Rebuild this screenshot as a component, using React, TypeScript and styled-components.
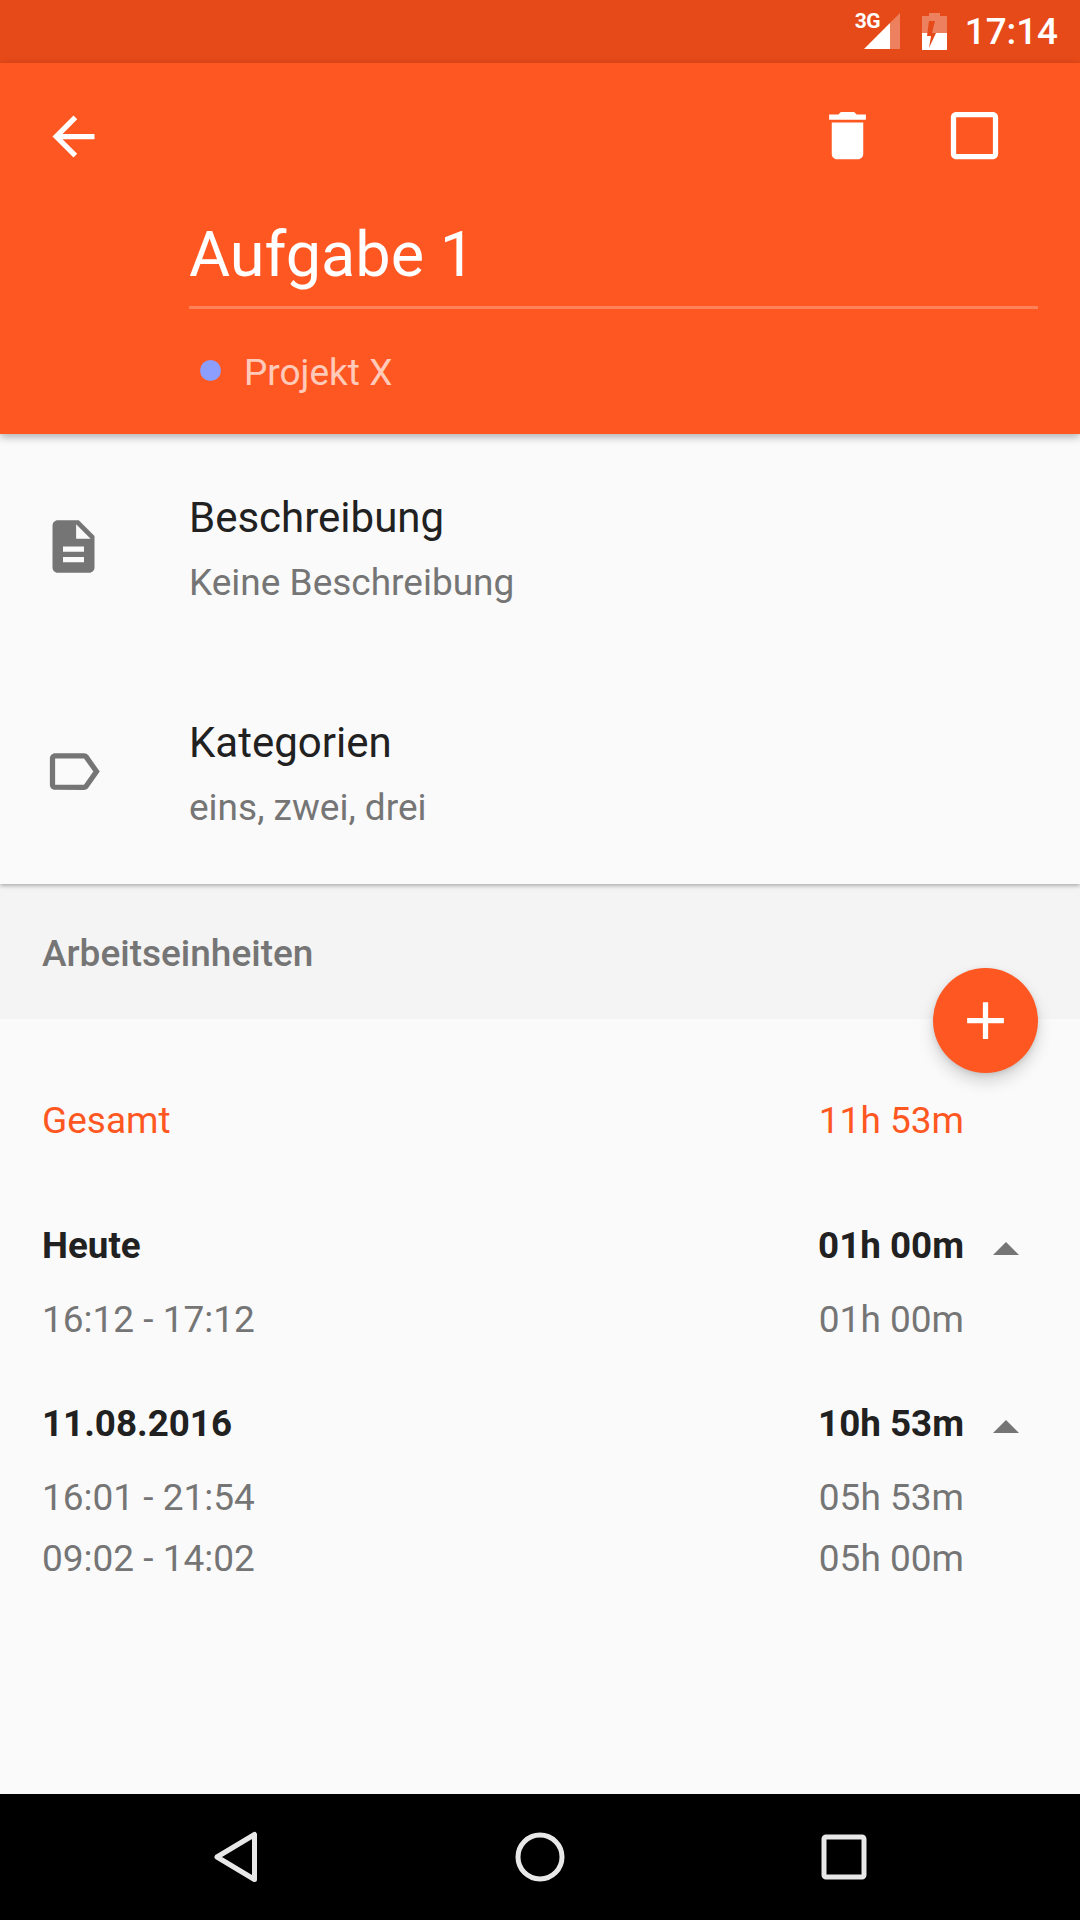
import { FC } from "react";
import styled, { createGlobalStyle } from "styled-components";

const palette = {
  primary: "#FF5722",
  primaryDark: "#E64A19",
  background: "#FAFAFA",
  section: "#F4F4F4",
  textDark: "#212121",
  textGrey: "#757575",
};

const GlobalStyle = createGlobalStyle`
  html, body {
    margin: 0;
    padding: 0;
    background: ${palette.background};
    font-family: Roboto, "Noto Sans", sans-serif;
  }
  * {
    box-sizing: border-box;
  }
`;

const Screen = styled.div`
  width: 1080px;
  height: 1920px;
  display: flex;
  flex-direction: column;
  overflow: hidden;
  background: ${palette.background};
`;

const StatusBar = styled.div`
  height: 63px;
  flex: none;
  display: flex;
  justify-content: flex-end;
  align-items: center;
  padding-right: 22px;
  background: ${palette.primaryDark};
  color: #fff;
`;

const SignalWrap = styled.div`
  position: relative;
  width: 45px;
  height: 36px;
  margin-right: 22px;
  margin-top: -1px;
`;

const NetworkLabel = styled.span`
  position: absolute;
  left: 0;
  top: 0;
  font-size: 21px;
  line-height: 17px;
  font-weight: 700;
  letter-spacing: -0.5px;
`;

const SignalSvg = styled.svg`
  position: absolute;
  right: 0;
  top: 0;
  width: 36px;
  height: 36px;
`;

const BatterySvg = styled.svg`
  width: 25px;
  height: 37px;
  margin-right: 18px;
  margin-top: -1px;
`;

const Clock = styled.span`
  font-size: 36.75px;
  font-weight: 500;
  line-height: 40px;
`;

const Header = styled.header`
  position: relative;
  z-index: 2;
  height: 371px;
  flex: none;
  background: ${palette.primary};
  box-shadow: 0 3px 8px rgba(0, 0, 0, 0.3);
  color: #fff;
`;

const Toolbar = styled.div`
  height: 147px;
  display: flex;
  align-items: center;
  padding: 0 42px;
`;

const IconSlot = styled.div`
  width: 127px;
  height: 126px;
  margin-top: -2px;
  display: flex;
  align-items: center;
  justify-content: center;
`;

const ToolbarSpacer = styled.div`
  flex: 1;
`;

const BackSlot = styled.div`
  flex: none;
  width: 63px;
  height: 63px;
`;

const Icon = styled.svg<{ $color?: string }>`
  display: block;
  width: 63px;
  height: 63px;
  fill: ${(props) => props.$color ?? "#fff"};
`;

const TitleBlock = styled.div`
  margin: 0 42px 0 189px;
  height: 99px;
  border-bottom: 3px solid rgba(255, 255, 255, 0.25);
`;

const Title = styled.div`
  font-size: 63px;
  line-height: 70px;
  padding-top: 10px;
`;

const ProjectRow = styled.div`
  height: 125px;
  display: flex;
  align-items: center;
  padding-left: 200px;
  padding-bottom: 2px;
`;

const ProjectDot = styled.span`
  width: 21px;
  height: 21px;
  border-radius: 50%;
  background: #8c9eff;
  margin-right: 23px;
`;

const ProjectName = styled.span`
  font-size: 37px;
  line-height: 44px;
  margin-top: 5px;
  color: rgba(255, 255, 255, 0.7);
`;

const InfoList = styled.section`
  position: relative;
  z-index: 1;
  flex: none;
  background: ${palette.background};
  box-shadow: 0 2px 4px rgba(0, 0, 0, 0.28);
`;

const InfoRow = styled.div`
  height: 225px;
  display: flex;
  align-items: center;
  padding-left: 42px;
`;

const InfoIcon = styled.div`
  width: 147px;
  flex: none;
`;

const InfoText = styled.div`
  display: flex;
  flex-direction: column;
  gap: 18px;
  margin-top: 5px;
`;

const InfoTitle = styled.div`
  font-size: 42px;
  line-height: 50px;
  color: ${palette.textDark};
`;

const InfoSub = styled.div`
  font-size: 37px;
  line-height: 44px;
  color: ${palette.textGrey};
`;

const SectionBar = styled.div`
  height: 135px;
  flex: none;
  display: flex;
  align-items: center;
  padding: 4px 0 0 42px;
  background: ${palette.section};
`;

const SectionLabel = styled.span`
  font-size: 37px;
  font-weight: 500;
  color: ${palette.textGrey};
`;

const Content = styled.main`
  position: relative;
  flex: 1;
  padding-top: 77px;
`;

const Fab = styled.button`
  position: absolute;
  top: -51px;
  right: 42px;
  width: 105px;
  height: 105px;
  padding: 0;
  border: none;
  border-radius: 50%;
  display: flex;
  align-items: center;
  justify-content: center;
  background: ${palette.primary};
  box-shadow: 0 8px 16px rgba(0, 0, 0, 0.16), 0 2px 5px rgba(0, 0, 0, 0.1);
`;

const TotalRow = styled.div`
  height: 50px;
  margin-bottom: 72px;
  display: flex;
  align-items: center;
  padding-left: 42px;
`;

const DayGroup = styled.div`
  margin-top: 46px;
`;

const DayRow = styled.div`
  height: 55px;
  margin-bottom: 16px;
  display: flex;
  align-items: center;
  padding-left: 42px;
`;

const EntryRow = styled.div`
  height: 61px;
  display: flex;
  align-items: center;
  padding-left: 42px;
`;

const Label = styled.span<{ $color: string; $bold?: boolean }>`
  flex: 1;
  font-size: ${(props) => (props.$bold ? 36.75 : 37)}px;
  line-height: 44px;
  font-weight: ${(props) => (props.$bold ? 700 : 400)};
  color: ${(props) => props.$color};
`;

const Value = styled(Label)`
  flex: none;
`;

const CaretSlot = styled.div`
  width: 116px;
  flex: none;
  padding-left: 29px;
`;

const Caret = styled.svg`
  display: block;
  width: 26px;
  height: 13px;
  fill: ${palette.textGrey};
  margin-top: 6px;
`;

const NavBar = styled.nav`
  height: 126px;
  flex: none;
  display: flex;
  justify-content: center;
  align-items: center;
  background: #000;
`;

const NavCell = styled.div`
  width: 304px;
  display: flex;
  justify-content: center;
`;

const NavIcon = styled.svg`
  display: block;
  width: 54px;
  height: 54px;
  fill: none;
  stroke: #e8e8e8;
  stroke-width: 5;
  stroke-linejoin: round;
`;

type TimeEntry = { range: string; duration: string };

type WorkDay = { label: string; total: string; entries: TimeEntry[] };

const workDays: WorkDay[] = [
  {
    label: "Heute",
    total: "01h 00m",
    entries: [{ range: "16:12 - 17:12", duration: "01h 00m" }],
  },
  {
    label: "11.08.2016",
    total: "10h 53m",
    entries: [
      { range: "16:01 - 21:54", duration: "05h 53m" },
      { range: "09:02 - 14:02", duration: "05h 00m" },
    ],
  },
];

const GlyphIcon: FC<{ d: string; color?: string }> = ({ d, color }) => (
  <Icon viewBox="0 0 24 24" $color={color}>
    <path d={d} />
  </Icon>
);

const App: FC = () => (
  <>
    <GlobalStyle />
    <Screen>
      <StatusBar>
        <SignalWrap>
          <NetworkLabel>3G</NetworkLabel>
          <SignalSvg viewBox="0 0 36 36">
            <path d="M36 0V36H26V10Z" fill="#fff" fillOpacity="0.3" />
            <path d="M26 10V36H0Z" fill="#fff" />
          </SignalSvg>
        </SignalWrap>
        <BatterySvg viewBox="0 0 25 37">
          <path d="M7 0H18V3H25V20H0V3H7Z" fill="#fff" fillOpacity="0.3" />
          <path d="M0 20H25V37H0Z" fill="#fff" />
          <path d="M7 8H13L10 20H14L7 35L9 23H5Z" fill={palette.primaryDark} />
        </BatterySvg>
        <Clock>17:14</Clock>
      </StatusBar>

      <Header>
        <Toolbar>
          <BackSlot>
            <GlyphIcon d="M20 11H7.83l5.59-5.59L12 4l-8 8 8 8 1.41-1.41L7.83 13H20v-2z" />
          </BackSlot>
          <ToolbarSpacer />
          <IconSlot>
            <GlyphIcon d="M6 19c0 1.1.9 2 2 2h8c1.1 0 2-.9 2-2V7H6v12zM19 4h-3.5l-1-1h-5l-1 1H5v2h14V4z" />
          </IconSlot>
          <IconSlot>
            <GlyphIcon d="M19 5v14H5V5h14m0-2H5c-1.1 0-2 .9-2 2v14c0 1.1.9 2 2 2h14c1.1 0 2-.9 2-2V5c0-1.1-.9-2-2-2z" />
          </IconSlot>
        </Toolbar>
        <TitleBlock>
          <Title>Aufgabe 1</Title>
        </TitleBlock>
        <ProjectRow>
          <ProjectDot />
          <ProjectName>Projekt X</ProjectName>
        </ProjectRow>
      </Header>

      <InfoList>
        <InfoRow>
          <InfoIcon>
            <GlyphIcon
              color={palette.textGrey}
              d="M14 2H6c-1.1 0-1.99.9-1.99 2L4 20c0 1.1.89 2 1.99 2H18c1.1 0 2-.9 2-2V8l-6-6zm2 16H8v-2h8v2zm0-4H8v-2h8v2zm-3-5V3.5L18.5 9H13z"
            />
          </InfoIcon>
          <InfoText>
            <InfoTitle>Beschreibung</InfoTitle>
            <InfoSub>Keine Beschreibung</InfoSub>
          </InfoText>
        </InfoRow>
        <InfoRow>
          <InfoIcon>
            <GlyphIcon
              color={palette.textGrey}
              d="M17.63 5.84C17.27 5.33 16.67 5 16 5L5 5.01C3.9 5.01 3 5.9 3 7v10c0 1.1.9 1.99 2 1.99L16 19c.67 0 1.27-.33 1.63-.84L22 12l-4.37-6.16zM16 17H5V7h11l3.55 5L16 17z"
            />
          </InfoIcon>
          <InfoText>
            <InfoTitle>Kategorien</InfoTitle>
            <InfoSub>eins, zwei, drei</InfoSub>
          </InfoText>
        </InfoRow>
      </InfoList>

      <SectionBar>
        <SectionLabel>Arbeitseinheiten</SectionLabel>
      </SectionBar>

      <Content>
        <Fab aria-label="add">
          <GlyphIcon d="M19 13h-6v6h-2v-6H5v-2h6V5h2v6h6v2z" />
        </Fab>

        <TotalRow>
          <Label $color={palette.primary}>Gesamt</Label>
          <Value $color={palette.primary}>11h 53m</Value>
          <CaretSlot />
        </TotalRow>

        {workDays.map((day) => (
          <DayGroup key={day.label}>
            <DayRow>
              <Label $color={palette.textDark} $bold>
                {day.label}
              </Label>
              <Value $color={palette.textDark} $bold>
                {day.total}
              </Value>
              <CaretSlot>
                <Caret viewBox="7 9 10 5">
                  <path d="M7 14l5-5 5 5z" />
                </Caret>
              </CaretSlot>
            </DayRow>
            {day.entries.map((entry) => (
              <EntryRow key={entry.range}>
                <Label $color={palette.textGrey}>{entry.range}</Label>
                <Value $color={palette.textGrey}>{entry.duration}</Value>
                <CaretSlot />
              </EntryRow>
            ))}
          </DayGroup>
        ))}
      </Content>

      <NavBar>
        <NavCell>
          <NavIcon viewBox="0 0 54 54">
            <path d="M45.5 4.5V49.5L8 27Z" />
          </NavIcon>
        </NavCell>
        <NavCell>
          <NavIcon viewBox="0 0 54 54">
            <circle cx="27" cy="27" r="22" />
          </NavIcon>
        </NavCell>
        <NavCell>
          <NavIcon viewBox="0 0 54 54">
            <rect x="7" y="7" width="40" height="40" rx="2" />
          </NavIcon>
        </NavCell>
      </NavBar>
    </Screen>
  </>
);

export default App;
